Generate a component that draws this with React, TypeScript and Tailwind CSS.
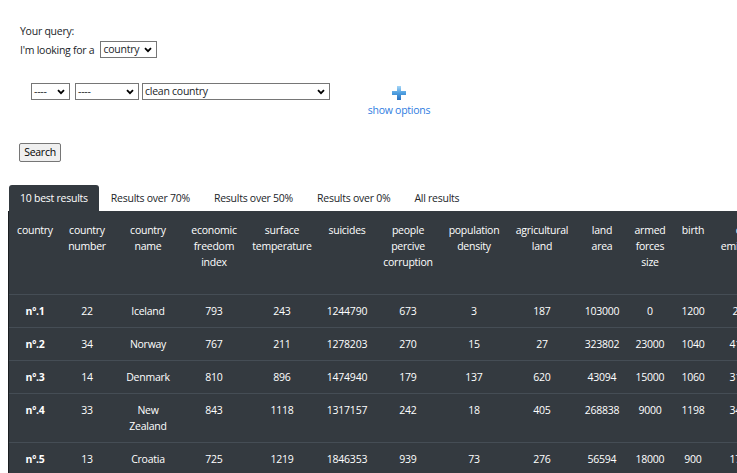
import React from "react";

const Chevron = () => (
  <svg width="8" height="6" viewBox="0 0 8 6" className="shrink-0">
    <path d="M1 1.2 L4 4.2 L7 1.2" stroke="#000" strokeWidth="1.8" fill="none" />
  </svg>
);

const FakeSelect = ({ w, text }: { w: string; text: string }) => (
  <div
    className={`${w} h-[17px] border border-[#767676] bg-white flex items-center justify-between pl-[2px] pr-[4px] leading-[15px]`}
  >
    <span className="whitespace-nowrap">{text}</span>
    <Chevron />
  </div>
);

const cols = [
  { w: "w-[52px]", h: ["country"] },
  { w: "w-[52px]", h: ["country", "number"] },
  { w: "w-[70px]", h: ["country", "name"] },
  { w: "w-[62px]", h: ["economic", "freedom", "index"] },
  { w: "w-[74px]", h: ["surface", "temperature"] },
  { w: "w-[56px]", h: ["suicides"] },
  { w: "w-[66px]", h: ["people", "percive", "corruption"] },
  { w: "w-[66px]", h: ["population", "density"] },
  { w: "w-[70px]", h: ["agricultural", "land"] },
  { w: "w-[50px]", h: ["land", "area"] },
  { w: "w-[46px]", h: ["armed", "forces", "size"] },
  { w: "w-[40px]", h: ["birth"] },
  { w: "w-[62px]", h: ["co2", "emissions"] },
];

const rows: string[][][] = [
  [["nº.1"], ["22"], ["Iceland"], ["793"], ["243"], ["1244790"], ["673"], ["3"], ["187"], ["103000"], ["0"], ["1200"], ["2500"]],
  [["nº.2"], ["34"], ["Norway"], ["767"], ["211"], ["1278203"], ["270"], ["15"], ["27"], ["323802"], ["23000"], ["1040"], ["41200"]],
  [["nº.3"], ["14"], ["Denmark"], ["810"], ["896"], ["1474940"], ["179"], ["137"], ["620"], ["43094"], ["15000"], ["1060"], ["31800"]],
  [["nº.4"], ["33"], ["New", "Zealand"], ["843"], ["1118"], ["1317157"], ["242"], ["18"], ["405"], ["268838"], ["9000"], ["1198"], ["34900"]],
  [["nº.5"], ["13"], ["Croatia"], ["725"], ["1219"], ["1846353"], ["939"], ["73"], ["276"], ["56594"], ["18000"], ["900"], ["17300"]],
];

const tabs = ["10 best results", "Results over 70%", "Results over 50%", "Results over 0%", "All results"];

export default function App() {
  return (
    <div className="w-[737px] h-[473px] overflow-hidden bg-white text-[#212529] text-[10.5px] tracking-[-0.25px] font-['Open_Sans',sans-serif]">
      {/* query */}
      <div className="pl-[20px] pt-[23px]">
        <div className="leading-[16px] h-[18px]">Your query:</div>
        <div className="flex items-center h-[17px] leading-[16px]">
          <span className="mr-[6px]">I'm looking for a</span>
          <FakeSelect w="w-[57px]" text="country" />
        </div>
      </div>

      {/* criteria row */}
      <div className="flex items-start mt-[25px] pl-[31px]">
        <FakeSelect w="w-[39px]" text="----" />
        <div className="w-[5px]" />
        <FakeSelect w="w-[64px]" text="----" />
        <div className="w-[3px]" />
        <FakeSelect w="w-[188px]" text="clean country" />
        <div className="ml-[36px] w-[66px] flex flex-col items-center pt-[3px]">
          <svg width="14" height="14" viewBox="0 0 14 14">
            <defs>
              <linearGradient id="pg" x1="0" y1="0" x2="0" y2="1">
                <stop offset="0" stopColor="#a6d6f7" />
                <stop offset="0.5" stopColor="#4f9fe0" />
                <stop offset="1" stopColor="#2a72c0" />
              </linearGradient>
            </defs>
            <path d="M5 0 H9 V5 H14 V9 H9 V14 H5 V9 H0 V5 H5 Z" fill="url(#pg)" />
          </svg>
          <span className="text-[#2f7de1] leading-[16px] mt-[2px] whitespace-nowrap">show options</span>
        </div>
      </div>

      {/* search */}
      <div className="pl-[19px] mt-[25px]">
        <button className="h-[19px] w-[42px] border border-[#767676] rounded-[2px] bg-[#efefef] leading-[15px] text-[10.5px] tracking-[-0.25px] text-black">
          Search
        </button>
      </div>

      {/* tabs */}
      <div className="flex mt-[23px] pl-[9px] h-[26px]">
        {tabs.map((t, i) => (
          <div
            key={t}
            className={
              i === 0
                ? "px-[11px] pt-[1px] flex items-center bg-[#343a40] text-white rounded-t-[3px] whitespace-nowrap"
                : "px-[12px] pt-[1px] flex items-center text-[#212529] whitespace-nowrap"
            }
          >
            {t}
          </div>
        ))}
      </div>

      {/* table */}
      <div className="ml-[8px] border-l border-[#1b1e21] bg-[#343a40] text-white w-[900px] leading-[16px]">
        <div className="flex h-[83px]">
          {cols.map((c, i) => (
            <div key={i} className={`${c.w} shrink-0 text-center pt-[11px] whitespace-nowrap`}>
              {c.h.map((l, j) => (
                <div key={j}>{l}</div>
              ))}
            </div>
          ))}
        </div>
        {rows.map((r, ri) => (
          <div key={ri} className="flex border-t border-[#454d55]">
            {r.map((cell, ci) => (
              <div
                key={ci}
                className={`${cols[ci].w} shrink-0 text-center pt-[8px] pb-[8px] whitespace-nowrap ${ci === 0 ? "font-bold" : ""}`}
              >
                {cell.map((l, j) => (
                  <div key={j}>{l}</div>
                ))}
              </div>
            ))}
          </div>
        ))}
      </div>
    </div>
  );
}
